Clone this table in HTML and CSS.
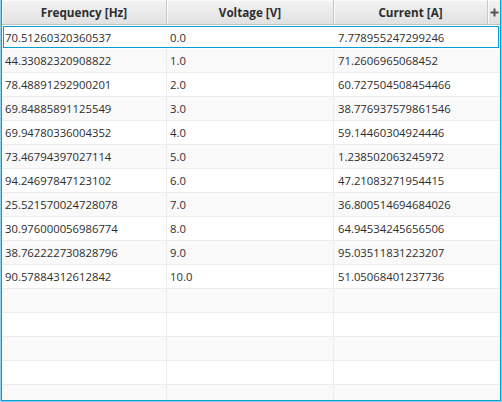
FILE: index.html
```html
<!DOCTYPE html>
<html>
<head>
<meta charset="utf-8">
<link rel="stylesheet" href="styles.css">
</head>
<body>
<div class="frame">
  <div class="table">
    <div class="header">
      <div class="hcell">Frequency [Hz]</div>
      <div class="hcell">Voltage [V]</div>
      <div class="hcell">Current [A]</div>
      <div class="hcell corner"><svg width="9" height="9" viewBox="0 0 9 9"><rect x="3.5" y="0.5" width="2" height="8" fill="#555"/><rect x="0.5" y="3.5" width="8" height="2" fill="#555"/></svg></div>
    </div>
    <div class="body">
      <div class="row focused"><div class="cell">70.51260320360537</div><div class="cell">0.0</div><div class="cell">7.778955247299246</div></div>
      <div class="row odd"><div class="cell">44.33082320908822</div><div class="cell">1.0</div><div class="cell">71.2606965068452</div></div>
      <div class="row"><div class="cell">78.48891292900201</div><div class="cell">2.0</div><div class="cell">60.727504508454466</div></div>
      <div class="row odd"><div class="cell">69.84885891125549</div><div class="cell">3.0</div><div class="cell">38.776937579861546</div></div>
      <div class="row"><div class="cell">69.94780336004352</div><div class="cell">4.0</div><div class="cell">59.14460304924446</div></div>
      <div class="row odd"><div class="cell">73.46794397027114</div><div class="cell">5.0</div><div class="cell">1.238502063245972</div></div>
      <div class="row"><div class="cell">94.24697847123102</div><div class="cell">6.0</div><div class="cell">47.21083271954415</div></div>
      <div class="row odd"><div class="cell">25.521570024728078</div><div class="cell">7.0</div><div class="cell">36.800514694684026</div></div>
      <div class="row"><div class="cell">30.976000056986774</div><div class="cell">8.0</div><div class="cell">64.94534245656506</div></div>
      <div class="row odd"><div class="cell">38.762222730828796</div><div class="cell">9.0</div><div class="cell">95.03511831223207</div></div>
      <div class="row"><div class="cell">90.57884312612842</div><div class="cell">10.0</div><div class="cell">51.05068401237736</div></div>
      <div class="row odd"><div class="cell"></div><div class="cell"></div><div class="cell"></div></div>
      <div class="row"><div class="cell"></div><div class="cell"></div><div class="cell"></div></div>
      <div class="row odd"><div class="cell"></div><div class="cell"></div><div class="cell"></div></div>
      <div class="row"><div class="cell"></div><div class="cell"></div><div class="cell"></div></div>
      <div class="row odd"><div class="cell"></div><div class="cell"></div><div class="cell"></div></div>
    </div>
  </div>
</div>
</body>
</html>
```

FILE: styles.css
```css
html, body {
  margin: 0;
  padding: 0;
  background: #ffffff;
}
.frame {
  width: 502px;
  height: 402px;
  box-sizing: border-box;
  border: 1px solid #8fd0ea;
  border-top: none;
  overflow: hidden;
}
.table {
  height: 401px;
  box-sizing: border-box;
  border: 1px solid #039ed3;
  border-top: none;
  overflow: hidden;
  font-family: "Open Sans", "Noto Sans", sans-serif;
  font-size: 11.3px;
  color: #2e2e2e;
  background: #ffffff;
}
.header {
  display: grid;
  grid-template-columns: 165px 167px 154px 1fr;
  height: 25px;
  box-sizing: border-box;
  border-bottom: 1px solid #c2c2c2;
  background: linear-gradient(to bottom, #f3f3f3, #e1e1e1);
}
.hcell {
  display: flex;
  align-items: center;
  justify-content: center;
  font-weight: bold;
  font-size: 11.7px;
  border-right: 1px solid #c8c8c8;
  box-shadow: inset 1px 1px 0 rgba(255,255,255,0.7);
}
.hcell.corner {
  border-right: none;
}
.row {
  display: grid;
  grid-template-columns: 165px 167px 1fr;
  height: 24px;
  box-sizing: border-box;
  border-bottom: 1px solid #ececec;
  background: #ffffff;
}
.row.odd {
  background: #f9f9f9;
}
.row.focused {
  border-bottom: none;
  box-shadow: inset 0 0 0 1px #ffffff, inset 0 0 0 2px #039ed3;
}
.cell {
  display: flex;
  align-items: center;
  padding-left: 3px;
  border-right: 1px solid #ececec;
  white-space: nowrap;
  overflow: hidden;
}
.cell:last-child {
  border-right: none;
  padding-left: 4px;
}
.row.focused .cell {
  border-right-color: transparent;
}
```
